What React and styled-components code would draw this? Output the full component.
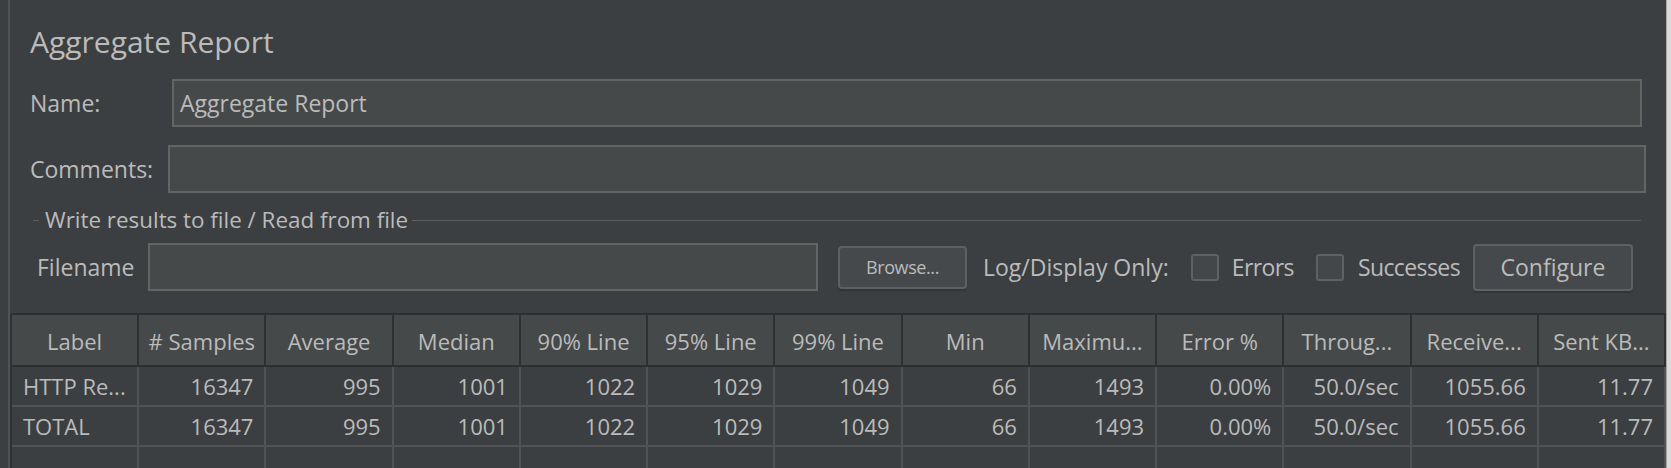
import React from 'react';
import styled, { createGlobalStyle } from 'styled-components';

const GlobalStyle = createGlobalStyle`
  html, body { margin: 0; padding: 0; background: #3c3f41; }
  body {
    font-family: "Open Sans", "Noto Sans", sans-serif;
    color: #bbbbbb;
    overflow: hidden;
  }
  * { box-sizing: border-box; }
`;

const Window = styled.div`
  display: flex;
  width: 1671px;
  height: 468px;
  background: #3c3f41;
  overflow: hidden;
`;

const Gutter = styled.div`
  flex: none;
  width: 10px;
  border-right: 2px solid #505355;
`;

const Main = styled.div`
  flex: 1;
  min-width: 0;
  display: flex;
  flex-direction: column;
`;

const RightEdge = styled.div`
  flex: none;
  width: 5px;
  background: #dadada;
  border-left: 1px solid #a8a8a8;
`;

const Form = styled.div`
  padding: 22px 0 0 20px;
  display: flex;
  flex-direction: column;
`;

const Title = styled.div`
  font-size: 30px;
  line-height: 40px;
  height: 40px;
  color: #bbbbbb;
  margin-bottom: 17px;
`;

const Row = styled.div`
  display: flex;
  align-items: center;
  height: 48px;
  margin-top: ${p => p.$top || 0}px;
  margin-right: ${p => p.$right || 0}px;
`;

const Label = styled.div`
  flex: none;
  width: ${p => p.$width}px;
  font-size: 23px;
  line-height: 48px;
  white-space: nowrap;
`;

const TextField = styled.div`
  flex: ${p => (p.$width ? 'none' : '1')};
  width: ${p => (p.$width ? `${p.$width}px` : 'auto')};
  height: ${p => p.$height || 48}px;
  background: #45494a;
  border: 2px solid #646464;
  padding-left: 6px;
  font-size: 23px;
  line-height: 44px;
  color: #bbbbbb;
  white-space: nowrap;
  overflow: hidden;
`;

const Group = styled.div`
  margin: 15px 25px 0 3px;
  display: flex;
  flex-direction: column;
`;

const GroupHeader = styled.div`
  display: flex;
  align-items: center;
  height: 24px;
`;

const GroupLine = styled.div`
  flex: ${p => (p.$grow ? '1' : 'none')};
  width: ${p => (p.$grow ? 'auto' : '6px')};
  height: 1px;
  background: #5b5e60;
`;

const GroupTitle = styled.div`
  font-size: 22.4px;
  line-height: 24px;
  padding: 0 4px 0 6px;
  white-space: nowrap;
`;

const FileRow = styled.div`
  display: flex;
  align-items: center;
  height: 48px;
  margin-top: 11px;
  padding: 0 8px 0 4px;
`;

const Text = styled.span`
  flex: none;
  margin-left: ${p => p.$gap || 0}px;
  font-size: ${p => p.$size || 23}px;
  letter-spacing: ${p => p.$tight ? '-0.6px' : 'normal'};
  white-space: nowrap;
`;

const Button = styled.div`
  flex: none;
  margin-left: ${p => (p.$push ? 'auto' : `${p.$gap || 0}px`)};
  width: ${p => p.$width}px;
  height: ${p => p.$height}px;
  display: flex;
  align-items: center;
  justify-content: center;
  background: #45494b;
  border: 2px solid #5e6163;
  border-radius: 4px;
  box-shadow: 0 2px 1px #333537;
  font-size: ${p => p.$size || 23}px;
  letter-spacing: ${p => p.$tight ? '-0.4px' : 'normal'};
  color: #bbbbbb;
  white-space: nowrap;
`;

const Check = styled.span`
  flex: none;
  margin-left: ${p => p.$gap || 0}px;
  width: 28px;
  height: 27px;
  background: #43474a;
  border: 2px solid #5f6264;
  border-radius: 3px;
`;

const Table = styled.div`
  margin-top: 22px;
  display: grid;
  grid-template-columns: repeat(13, 1fr);
  border-left: 2px solid #2f3133;
`;

const HeaderCell = styled.div`
  height: 54px;
  background: #45494a;
  border-top: 2px solid #2d2f31;
  border-bottom: 2px solid #2d2f31;
  border-right: 2px solid #2d2f31;
  font-size: 22px;
  line-height: 50px;
  padding-top: 1px;
  text-align: center;
  white-space: nowrap;
  overflow: hidden;
`;

const Cell = styled.div`
  height: 40px;
  border-right: 2px solid #4f5355;
  border-bottom: 2px solid #4f5355;
  font-size: 22px;
  line-height: 38px;
  padding: 0 11px;
  text-align: ${p => p.$align || 'right'};
  white-space: nowrap;
  overflow: hidden;
`;

const headers = [
  'Label', '# Samples', 'Average', 'Median', '90% Line', '95% Line', '99% Line',
  'Min', 'Maximu...', 'Error %', 'Throug...', 'Receive...', 'Sent KB...',
];

const rows = [
  ['HTTP Re...', '16347', '995', '1001', '1022', '1029', '1049', '66', '1493', '0.00%', '50.0/sec', '1055.66', '11.77'],
  ['TOTAL', '16347', '995', '1001', '1022', '1029', '1049', '66', '1493', '0.00%', '50.0/sec', '1055.66', '11.77'],
  ['', '', '', '', '', '', '', '', '', '', '', '', ''],
];

export default function App() {
  return (
    <>
      <GlobalStyle />
      <Window>
        <Gutter />
        <Main>
          <Form>
            <Title>Aggregate Report</Title>
            <Row $right={24}>
              <Label $width={142}>Name:</Label>
              <TextField>Aggregate Report</TextField>
            </Row>
            <Row $top={18} $right={20}>
              <Label $width={138}>Comments:</Label>
              <TextField />
            </Row>
            <Group>
              <GroupHeader>
                <GroupLine />
                <GroupTitle>Write results to file / Read from file</GroupTitle>
                <GroupLine $grow />
              </GroupHeader>
              <FileRow>
                <Label $width={111}>Filename</Label>
                <TextField $width={670} />
                <Button $gap={20} $width={129} $height={43} $size={18} $tight>Browse...</Button>
                <Text $gap={16}>Log/Display Only:</Text>
                <Check $gap={22} />
                <Text $gap={13} $tight>Errors</Text>
                <Check $gap={22} />
                <Text $gap={14} $tight>Successes</Text>
                <Button $push $width={160} $height={47}>Configure</Button>
              </FileRow>
            </Group>
          </Form>
          <Table>
            {headers.map(h => (
              <HeaderCell key={h}>{h}</HeaderCell>
            ))}
            {rows.map((r, ri) =>
              r.map((v, ci) => (
                <Cell key={`${ri}-${ci}`} $align={ci === 0 ? 'left' : 'right'}>
                  {v}
                </Cell>
              ))
            )}
          </Table>
        </Main>
        <RightEdge />
      </Window>
    </>
  );
}
